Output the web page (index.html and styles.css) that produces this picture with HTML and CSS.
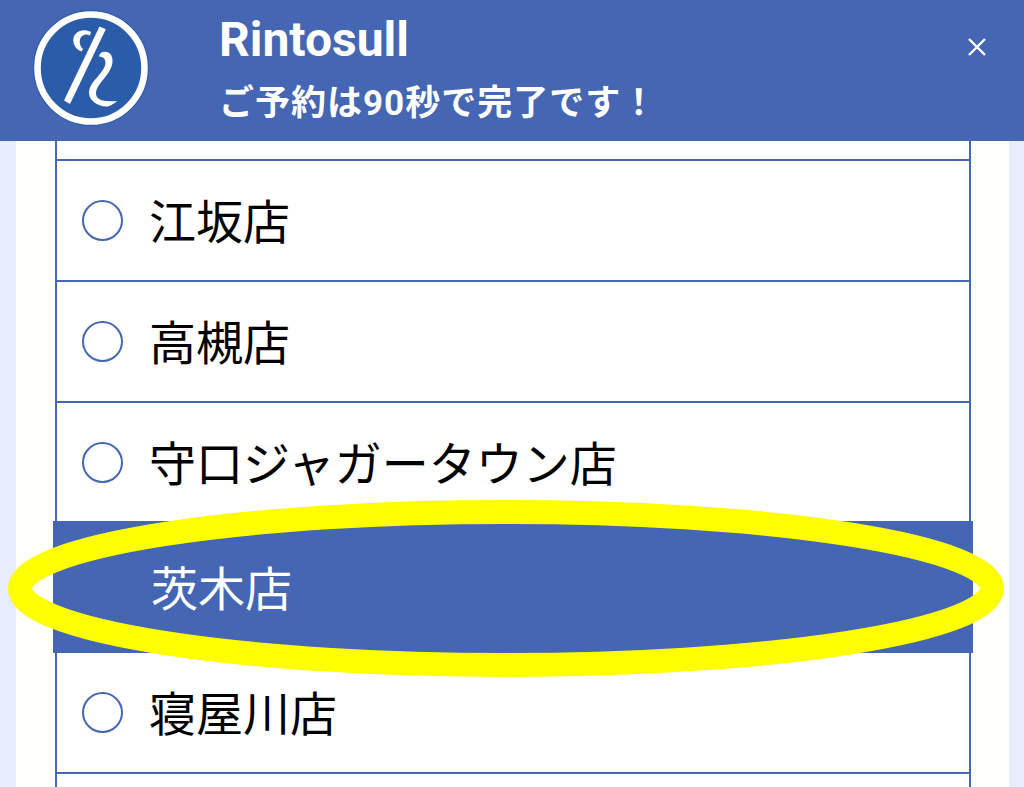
FILE: index.html
```
<!DOCTYPE html>
<html lang="ja">
<head>
  <meta charset="UTF-8">
  <meta name="viewport" content="width=device-width, initial-scale=1">
  <title>Rintosull</title>
  <link rel="stylesheet" href="styles.css">
</head>
<body>

<header class="header">
  <svg class="logo" viewBox="0 0 120 120" aria-hidden="true">
    <circle cx="60" cy="60" r="58" fill="#2a5caa"/>
    <circle cx="60" cy="60" r="53.5" fill="none" stroke="#fff" stroke-width="6.6"/>
    <g fill="#fff">
      <path d="M68.5 18.5 L74.8 21.2 L39 96 L33 92.5 Z"/>
      <path d="M60 24 C52 19.5 42.3 23.5 42.3 32 C42.3 37.5 46 42 50.5 43.5 L52 41 C48.5 37.5 47.8 32.5 50 29.2 C52 26.3 56 25.8 59 27.5 Z"/>
      <path d="M68 48.5 C68.5 44.5 72 43.3 75 43.7 C82 44.5 83.5 54 79 62 C75 70 65.5 77 65 84.5 C64.5 92 72 94 86.5 93 C82 96 79 98.5 75.5 98.5 C66 98.5 57.5 92 58 84 C58.5 75 68 69 73 60 C76 54.5 74.5 48.5 68 48.5 Z"/>
    </g>
  </svg>
  <div class="header-text">
    <h1>Rintosull</h1>
    <p>ご予約は90秒で完了です！</p>
  </div>
  <button class="close" type="button" aria-label="閉じる">
    <svg viewBox="0 0 18 18" aria-hidden="true">
      <path d="M1 1 L17 17 M17 1 L1 17" stroke="#fff" stroke-width="2.4" fill="none"/>
    </svg>
  </button>
</header>

<main class="panel">
  <form class="shops">
    <div class="shop-above"></div>
    <label class="shop"><input type="radio" name="shop" value="esaka"><span>江坂店</span></label>
    <label class="shop"><input type="radio" name="shop" value="takatsuki"><span>高槻店</span></label>
    <label class="shop"><input type="radio" name="shop" value="moriguchi"><span>守口ジャガータウン店</span></label>
    <div class="selected-row">
      <label class="shop selected"><input type="radio" name="shop" value="ibaraki" checked><span>茨木店</span></label>
      <svg class="marker" aria-hidden="true">
        <ellipse cx="50%" cy="50%" rx="50%" ry="50%"/>
      </svg>
    </div>
    <label class="shop"><input type="radio" name="shop" value="neyagawa"><span>寝屋川店</span></label>
  </form>
</main>

</body>
</html>
```

FILE: styles.css
```
* {
  box-sizing: border-box;
}
body {
  margin: 0;
  min-height: 100vh;
  display: flex;
  flex-direction: column;
  background-color: #e7ecff;
  font-family: Roboto, "Noto Sans CJK JP", sans-serif;
}
.header {
  display: flex;
  align-items: flex-start;
  padding: 8px 36px 13px 31px;
  background-color: #4566b2;
  color: white;
}
.logo {
  flex: none;
  width: 120px;
  height: 120px;
}
.header-text {
  flex: 1;
  margin-left: 68px;
}
.header-text h1 {
  margin: 4px 0 0;
  font-size: 48px;
  line-height: 56px;
}
.header-text p {
  margin: 12px 0 0;
  font-size: 35px;
  font-weight: bold;
  line-height: 48px;
  letter-spacing: 1px;
}
.close {
  width: 22px;
  height: 22px;
  margin-top: 28px;
  padding: 2px;
  border: none;
  background: none;
  cursor: pointer;
}
.close svg {
  display: block;
  width: 18px;
  height: 18px;
}
.panel {
  flex: 1;
  display: flex;
  margin: 0 15px 0 16px;
  padding: 0 38px 0 39px;
  background-color: #fffffb;
}
.shops {
  flex: 1;
  border: solid #4566b2;
  border-width: 0 2px;
  background-color: white;
}
.shop-above {
  height: 20px;
  border-bottom: 2px solid #4566b2;
}
.shop {
  display: flex;
  align-items: center;
  height: 121px;
  padding-left: 25px;
  border-bottom: 2px solid #4566b2;
  font-size: 47px;
  color: black;
  cursor: pointer;
}
.shop span {
  padding-bottom: 4px;
}
.shop input {
  appearance: none;
  flex: none;
  width: 41px;
  height: 41px;
  margin: 0 26px 0 0;
  border: 2px solid #4566b2;
  border-radius: 50%;
}
.selected-row {
  position: relative;
  margin: -3px -4px 0;
}
.shop.selected {
  height: 132px;
  padding-left: 31px;
  border-bottom: none;
  background-color: #4566b2;
  color: white;
}
/* yellow ring around the chosen shop */
.marker {
  position: absolute;
  top: -9px;
  left: -33px;
  width: calc(100% + 52px);
  height: 153px;
  overflow: visible;
  pointer-events: none;
}
.marker ellipse {
  fill: none;
  stroke: #ffff00;
  stroke-width: 24px;
}
```
